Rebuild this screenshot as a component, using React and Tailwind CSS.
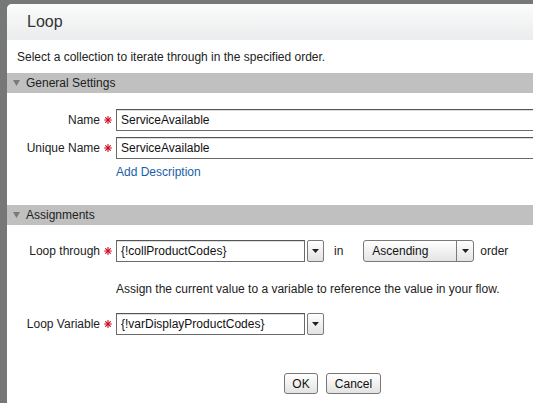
import React from "react";

const font = { fontFamily: '"Liberation Sans", Arial, sans-serif' };

function Arrow() {
  return (
    <svg width="7" height="4" viewBox="0 0 7 4"><path d="M0 0 H7 L3.5 4 Z" fill="#222" /></svg>
  );
}

function DropBtn() {
  return (
    <div className="w-[17px] h-[22px] ml-[2px] border border-[#7a7a7a] rounded-[2px] bg-gradient-to-b from-[#ffffff] to-[#e2e2e2] flex items-center justify-center">
      <Arrow />
    </div>
  );
}

function Req() {
  return (
    <span className="w-[16px] flex items-center justify-center">
      <svg width="8" height="8" viewBox="0 0 8 8">
        <g stroke="#d0021b" strokeWidth="1.1" strokeLinecap="round">
          <path d="M4 0.6 V7.4" />
          <path d="M0.6 4 H7.4" />
          <path d="M1.6 1.6 L6.4 6.4" />
          <path d="M6.4 1.6 L1.6 6.4" />
        </g>
      </svg>
    </span>
  );
}

function Label({ children }) {
  return <div className="w-[93px] text-right text-[12px] text-[#222]">{children}</div>;
}

function TextInput({ value, w }) {
  return (
    <div className={`${w} h-[22px] border border-[#6a6a6a] border-t-[#555] bg-white flex items-center pl-[4px] text-[12px] text-[#111] shadow-[inset_0_1px_0_#ddd] whitespace-nowrap overflow-hidden`}>
      {value}
    </div>
  );
}

function Bar({ children }) {
  return (
    <div className="h-[20px] bg-[#c0c0c0] flex items-center pl-[6px] text-[12px] text-[#222]">
      <svg width="7" height="6" viewBox="0 0 7 6" className="mr-[6px]"><path d="M0 0 H7 L3.5 6 Z" fill="#7a7a7a" /></svg>
      {children}
    </div>
  );
}

export default function App() {
  return (
    <div style={font} className="w-[533px] h-[403px] bg-[#767878] pl-[7px] pt-[4px] overflow-hidden">
      <div className="w-[540px] h-[420px] bg-white rounded-tl-[5px] flex flex-col">
        <div className="h-[36px] rounded-tl-[5px] bg-gradient-to-b from-[#fbfbfb] to-[#eaeced] flex items-center pl-[20px] text-[16px] text-[#333]">
          Loop
        </div>
        <div className="h-[33px] flex items-center pl-[10px] text-[12px] text-[#222]">
          Select a collection to iterate through in the specified order.
        </div>
        <Bar>General Settings</Bar>
        <div className="pt-[16px] h-[112px] flex flex-col">
          <div className="flex items-center">
            <Label>Name</Label>
            <Req />
            <TextInput value="ServiceAvailable" w="w-[430px]" />
          </div>
          <div className="flex items-center mt-[6px]">
            <Label>Unique Name</Label>
            <Req />
            <TextInput value="ServiceAvailable" w="w-[430px]" />
          </div>
          <div className="pl-[109px] mt-[4px] text-[12px] text-[#1b5ea8]">Add Description</div>
        </div>
        <Bar>Assignments</Bar>
        <div className="pt-[15px] flex flex-col">
          <div className="flex items-center">
            <Label>Loop through</Label>
            <Req />
            <TextInput value="{!collProductCodes}" w="w-[189px]" />
            <DropBtn />
            <span className="ml-[10px] text-[12px] text-[#222]">in</span>
            <div className="ml-[20px] w-[111px] h-[22px] border border-[#7a7a7a] rounded-[3px] bg-gradient-to-b from-[#ffffff] to-[#e4e4e4] flex items-center text-[12px] text-[#111]">
              <span className="flex-1 pl-[8px]">Ascending</span>
              <div className="w-[17px] h-full border-l border-[#7a7a7a] flex items-center justify-center"><Arrow /></div>
            </div>
            <span className="ml-[6px] text-[12px] text-[#222]">order</span>
          </div>
          <div className="pl-[109px] mt-[19px] text-[12px] text-[#222] h-[16px] leading-[16px]">
            Assign the current value to a variable to reference the value in your flow.
          </div>
          <div className="flex items-center mt-[16px]">
            <Label>Loop Variable</Label>
            <Req />
            <TextInput value="{!varDisplayProductCodes}" w="w-[189px]" />
            <DropBtn />
          </div>
          <div className="flex justify-start pl-[277px] mt-[38px] gap-[8px]">
            <button className="w-[34px] h-[21px] border border-[#777] rounded-[3px] bg-gradient-to-b from-[#ffffff] to-[#e3e3e3] text-[12px] text-[#111]">OK</button>
            <button className="w-[55px] h-[21px] border border-[#777] rounded-[3px] bg-gradient-to-b from-[#ffffff] to-[#e3e3e3] text-[12px] text-[#111]">Cancel</button>
          </div>
        </div>
      </div>
    </div>
  );
}
